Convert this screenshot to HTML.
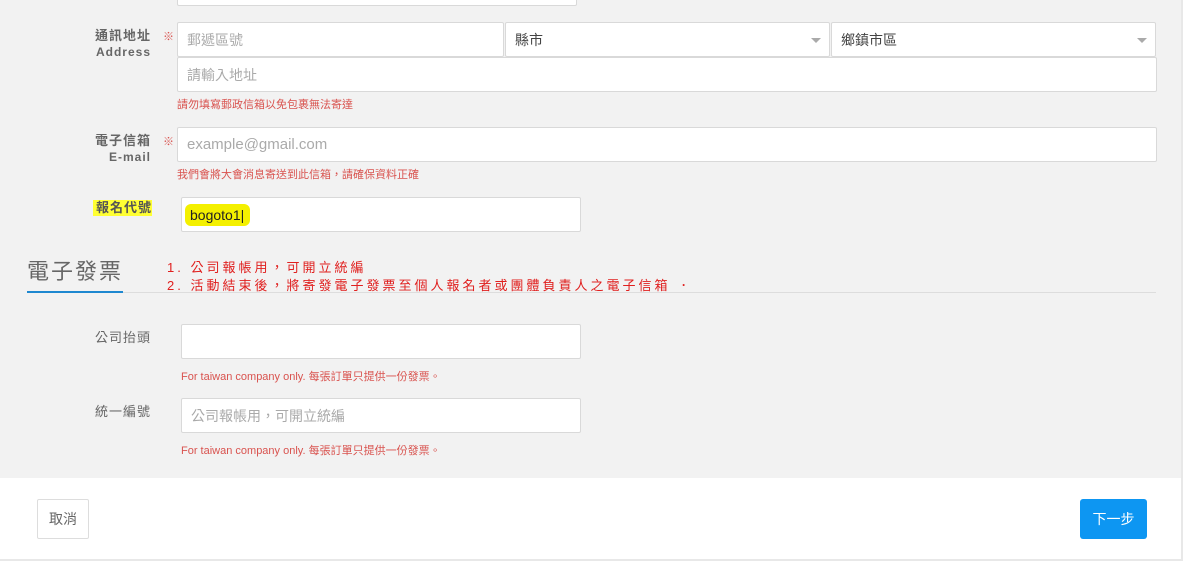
<!DOCTYPE html>
<html><head><meta charset="utf-8"><style>
*{box-sizing:border-box;margin:0;padding:0}
body{width:1183px;height:561px;background:#e8e8e8;position:relative;overflow:hidden;font-family:"Liberation Sans","Noto Sans CJK TC",sans-serif}
.a{position:absolute}
.bg{left:0;top:0;width:1181px;height:478px;background:#f2f2f2}
.ft{left:0;top:478px;width:1181px;height:81px;background:#fff}
.in{position:absolute;background:#fff;border:1px solid #d9d9d9;border-radius:2px;font-size:14px;color:#aaa;padding-left:9px;display:flex;align-items:center}
.lab{position:absolute;font-size:13px;color:#666;text-align:right;font-weight:bold;letter-spacing:1px;line-height:16px}
.hint{position:absolute;font-size:11px;color:#d9534f}
.star{position:absolute;font-size:11px;color:#d9534f}
.arr{position:absolute;right:8px;top:15px;width:0;height:0;border-left:5px solid transparent;border-right:5px solid transparent;border-top:5px solid #aaa}
.red{position:absolute;left:167px;font-size:13px;color:#e0201f;letter-spacing:3px}
</style></head><body>
<div class="a bg"></div>
<div class="a ft"></div>
<div class="in" style="left:177px;top:-28px;width:400px;height:34px"></div>

<div class="lab" style="left:80px;top:28px;width:71px">通訊地址<br><span style="font-size:12px">Address</span></div>
<div class="star" style="left:163px;top:28px">※</div>
<div class="in" style="left:177px;top:22px;width:327px;height:35px">郵遞區號</div>
<div class="in" style="left:505px;top:22px;width:325px;height:35px;color:#444">縣市<span class="arr"></span></div>
<div class="in" style="left:831px;top:22px;width:325px;height:35px;color:#444">鄉鎮市區<span class="arr"></span></div>
<div class="in" style="left:177px;top:57px;width:980px;height:35px">請輸入地址</div>
<div class="hint" style="left:177px;top:96px">請勿填寫郵政信箱以免包裹無法寄達</div>

<div class="lab" style="left:80px;top:133px;width:71px">電子信箱<br><span style="font-size:12px">E-mail</span></div>
<div class="star" style="left:163px;top:133px">※</div>
<div class="in" style="left:177px;top:127px;width:980px;height:35px;font-size:15px">example@gmail.com</div>
<div class="hint" style="left:177px;top:166px">我們會將大會消息寄送到此信箱，請確保資料正確</div>

<div class="lab" style="left:93px;top:200px;width:59px;background:#ffff33;color:#555">報名代號</div>
<div class="in" style="left:181px;top:197px;width:400px;height:35px;color:#222;font-size:14px;padding-left:3px"><span style="background:#f4f000;padding:3px 6px 3px 5px;border-radius:6px">bogoto1|</span></div>

<div class="a" style="left:27px;top:254px;font-size:22px;color:#666;letter-spacing:2px">電子發票</div>
<div class="a" style="left:27px;top:292px;width:1129px;height:1px;background:#ddd"></div>
<div class="a" style="left:27px;top:291px;width:96px;height:2px;background:#1e88d0"></div>
<div class="red" style="top:257px">1. 公司報帳用，可開立統編</div>
<div class="red" style="top:275px">2. 活動結束後，將寄發電子發票至個人報名者或團體負責人之電子信箱 ．</div>

<div class="lab" style="left:80px;top:330px;width:71px;font-weight:normal">公司抬頭</div>
<div class="in" style="left:181px;top:324px;width:400px;height:35px"></div>
<div class="hint" style="left:181px;top:368px">For taiwan company only. 每張訂單只提供一份發票。</div>

<div class="lab" style="left:80px;top:404px;width:71px;font-weight:normal">統一編號</div>
<div class="in" style="left:181px;top:398px;width:400px;height:35px">公司報帳用，可開立統編</div>
<div class="hint" style="left:181px;top:442px">For taiwan company only. 每張訂單只提供一份發票。</div>

<div class="a" style="left:37px;top:499px;width:52px;height:40px;border:1px solid #ddd;border-radius:2px;background:#fff;font-size:14px;color:#666;display:flex;align-items:center;justify-content:center">取消</div>
<div class="a" style="left:1080px;top:499px;width:67px;height:40px;border-radius:3px;background:#0d96f2;font-size:14px;color:#fff;display:flex;align-items:center;justify-content:center">下一步</div>
</body></html>
